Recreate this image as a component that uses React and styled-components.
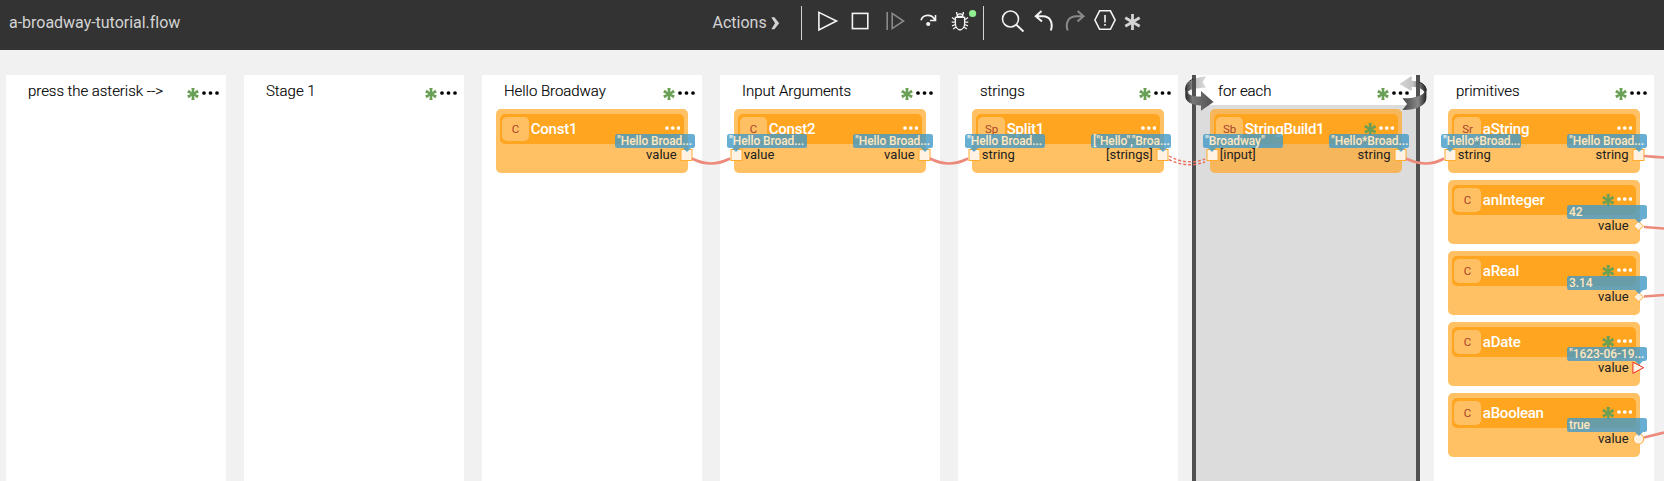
import React from "react";
import styled, { createGlobalStyle, css } from "styled-components";

const GlobalStyle = createGlobalStyle`
  * { box-sizing: border-box; }
  body {
    margin: 0;
    overflow: hidden;
    background: #f1f1f1;
    font-family: Roboto, "Liberation Sans", sans-serif;
  }
`;

const Page = styled.div`
  display: flex;
  flex-direction: column;
  height: 481px;
  overflow: hidden;
`;

const Toolbar = styled.header`
  display: flex;
  flex: none;
  height: 50px;
  background: #333;
  color: #d3d3d3;
  font-size: 16px;
  line-height: 46px;
`;

const FileName = styled.div`
  width: 712.5px;
  padding-left: 9px;
  letter-spacing: -0.02px;
`;

const Actions = styled.div`
  display: flex;
  gap: 4px;
  width: 88.5px;
`;

const Chevron = styled.svg`
  width: 9px;
  height: 14px;
  margin-top: 16px;
`;

const ToolGroup = styled.div`
  display: flex;
  height: 34px;
  margin-top: 6px;
  padding-left: ${(p) => p.$inset}px;
  width: ${(p) => p.$width}px;
  border-left: 1px solid #d3d3d3;
`;

const Tool = styled.svg`
  flex: none;
  width: ${(p) => p.$width}px;
  height: 34px;
  overflow: visible;
  fill: none;
  stroke: ${(p) => (p.$disabled ? "#8a8a8a" : "#f4f4f4")};
  stroke-width: 1.6;
`;

const Canvas = styled.main`
  position: relative;
  display: flex;
  flex: 1;
  gap: 18px;
  padding: 25px 0 0 6px;
`;

const StageColumn = styled.section`
  flex: none;
  width: 220px;
  background: ${(p) => (p.$loop ? "#dcdcdc" : "#fff")};
  ${(p) =>
    p.$loop &&
    css`
      position: relative;
      width: 228px;
      margin: 0 -4px;
      border: solid #505052;
      border-width: 0 4px;
    `}
`;

const StageHeader = styled.div`
  display: flex;
  align-items: center;
  height: 30px;
  padding: 2px 7px 0 22px;
  background: #fff;
`;

const StageTitle = styled.div`
  flex: 1;
  color: #000;
  font-size: 15px;
  font-weight: 300;
  letter-spacing: -0.05px;
  line-height: 30px;
  white-space: nowrap;
  -webkit-text-stroke: 0.15px #000;
`;

const Glyph = styled.svg`
  flex: none;
  width: ${(p) => p.$width}px;
  height: ${(p) => p.$height}px;
  margin: ${(p) => p.$margin || 0};
`;

const CardList = styled.div`
  display: flex;
  flex-direction: column;
  gap: 6.9px;
  padding: 3.8px 14px 0;
`;

const Card = styled.article`
  position: relative;
  height: 64.1px;
  padding: 5.4px 4.4px;
  border-radius: 5px;
  background: ${(p) => (p.$dim ? "#f5b65c" : "#ffc164")};
`;

const CardHeader = styled.div`
  display: flex;
  align-items: center;
  height: 29.6px;
  padding: 0 3.5px 0 2px;
  border-radius: 5px;
  background: #ffa51f;
`;

const ActorIcon = styled.div`
  width: 26.4px;
  height: 24.6px;
  border-radius: 5px;
  background: #ffc064;
  color: #a8432a;
  font-size: 11.5px;
  line-height: 24px;
  text-align: center;
`;

const ActorName = styled.div`
  flex: 1;
  padding-left: 2px;
  color: #fff;
  font-size: 15px;
  font-weight: 500;
  letter-spacing: -0.24px;
  line-height: 28px;
`;

const Ports = styled.div`
  display: flex;
  justify-content: space-between;
  padding: 2.6px 7px 0 5.4px;
  color: #222;
  font-size: 13px;
  line-height: 18px;
`;

const PortMark = styled.svg`
  position: absolute;
  top: 39.3px;
  ${(p) => p.$side}: -4.5px;
  width: 13px;
  height: 13px;
  overflow: visible;
  fill: #fff2e2;
  stroke: #ffab2e;
`;

const Value = styled.div`
  position: absolute;
  top: 25.3px;
  ${(p) => p.$side}: -7px;
  width: 80px;
  height: 14px;
  padding-left: 2px;
  border-radius: 2.5px;
  background: #439bc9;
  color: #fff7e6;
  font-size: 12px;
  font-weight: 500;
  letter-spacing: -0.1px;
  line-height: 14px;
  white-space: nowrap;
  opacity: 0.8;

  &::after {
    content: "";
    position: absolute;
    top: 14px;
    ${(p) => p.$side}: 4.5px;
    border: solid transparent;
    border-width: 4.5px 4.5px 0;
    border-top-color: #439bc9;
  }
`;

const Overlay = styled.svg`
  position: absolute;
  inset: 0;
  width: 1664px;
  height: 431px;
  fill: none;
  stroke: #ec8b7b;
  stroke-width: 2.7;
  pointer-events: none;
`;

const LoopArrow = styled.svg`
  position: absolute;
  top: 0;
  ${(p) => p.$side}: ${(p) => p.$offset}px;
  width: 30px;
  height: 38px;
`;

function Asterisk({ size = 12, color = "#6a9f56", margin }) {
  return (
    <Glyph $width={size} $height={size} $margin={margin} viewBox="-6 -6 12 12">
      <g fill={color}>
        {[0, 60, 120].map((a) => (
          <path key={a} transform={`rotate(${a})`} d="M-1.6 -5.9H1.6L.9 0 1.6 5.9H-1.6L-.9 0Z" />
        ))}
      </g>
    </Glyph>
  );
}

function Dots({ color, width, margin }) {
  return (
    <Glyph $width={width} $height={4} $margin={margin} viewBox={`0 0 ${width} 4`}>
      {[2, width / 2, width - 2].map((x) => (
        <circle key={x} cx={x} cy="2" r="1.85" fill={color} />
      ))}
    </Glyph>
  );
}

function Port({ side, shape = "square" }) {
  return (
    <PortMark $side={side} viewBox="0 0 13 13">
      {shape === "square" && <rect x="1" y="1.5" width="11" height="11" />}
      {shape === "diamond" && <path d="M6.5 2.2L11.4 7 6.5 11.8 1.6 7Z" />}
      {shape === "circle" && <circle cx="6.5" cy="7" r="5.2" />}
      {shape === "triangle" && <path stroke="#f02a20" d="M.9 1.2L11.7 6.7.9 12.3Z" />}
    </PortMark>
  );
}

function Actor({ code, name, asterisk, dim, input, output }) {
  return (
    <Card $dim={dim}>
      <CardHeader>
        <ActorIcon>{code}</ActorIcon>
        <ActorName>{name}</ActorName>
        {asterisk && <Asterisk size={12.5} margin="0 2.5px 0 0" />}
        <Dots color="#fff" width={15.5} margin="0 0 1px" />
      </CardHeader>
      <Ports>
        <span>{input?.label}</span>
        <span>{output.label}</span>
      </Ports>
      {input && <Port side="left" />}
      <Port side="right" shape={output.shape} />
      {input && <Value $side="left">{input.value}</Value>}
      <Value $side="right">{output.value}</Value>
    </Card>
  );
}

function LoopArrows() {
  return (
    <>
      <LoopArrow $side="left" $offset={-12} viewBox="0 0 30 38">
        <defs>
          <linearGradient id="ribbonLeft" x1="0" x2="1">
            <stop offset="0" stopColor="#222" />
            <stop offset=".25" stopColor="#777" />
            <stop offset="1" stopColor="#505050" />
          </linearGradient>
          <linearGradient id="tailLeft" x1="0" x2="1">
            <stop offset="0" stopColor="#333" />
            <stop offset=".35" stopColor="#8c8c8c" />
            <stop offset=".55" stopColor="#c6c6c6" />
            <stop offset="1" stopColor="#dcdcdc" />
          </linearGradient>
        </defs>
        <path fill="url(#tailLeft)" d="M22.3 1.3C12 2.3 1.5 6.5 1.5 14.5L3 18C4 14.5 12 12.8 22 12.7L18.7 7Z" />
        <path fill="#505052" d="M8 0H12V14L8 15Z" />
        <path fill="none" stroke="#222" d="M9 4.2C4 6.3 1.6 9.7 1.7 14.5 1.8 16 3 17.5 4.5 18" />
        <path fill="url(#ribbonLeft)" d="M1.4 12.5C1 19 8 22 17 21.5V16L29.5 27 17 35.8V30.6C7 30 1.3 26.5 1.3 21Z" />
      </LoopArrow>
      <LoopArrow $side="right" $offset={-12} viewBox="0 0 30 38">
        <defs>
          <linearGradient id="ribbonRight" x1="0" x2="1">
            <stop offset="0" stopColor="#444" />
            <stop offset=".65" stopColor="#888" />
            <stop offset="1" stopColor="#222" />
          </linearGradient>
          <linearGradient id="headRight" x1="0" x2="1">
            <stop offset="0" stopColor="#d5d5d5" />
            <stop offset=".5" stopColor="#c2c2c2" />
            <stop offset="1" stopColor="#222" />
          </linearGradient>
        </defs>
        <path fill="url(#headRight)" d="M1.3 9L13.7 1V5.7C23 6.3 28.4 10 28.4 15L27 18C25 13.5 20 12 13.7 11.7V16Z" />
        <path fill="#505052" d="M18 0H22V14L18 12.5Z" />
        <path fill="none" stroke="#222" d="M21 7C25.5 8.8 28 11.5 28 15 27.5 17 26.5 18 25 19.5" />
        <path fill="url(#ribbonRight)" d="M28.4 13.5C28 20 18 23.5 4.5 23.3L9 29 4.5 35C19 35 28.4 30.5 28.4 23Z" />
      </LoopArrow>
    </>
  );
}

const hello = '"Hello Broad...';
const out = (label, value, shape) => ({ label, value, shape });

const stages = [
  { title: "press the asterisk -->", actors: [] },
  { title: "Stage 1", actors: [] },
  { title: "Hello Broadway", actors: [{ code: "C", name: "Const1", output: out("value", hello) }] },
  {
    title: "Input Arguments",
    actors: [{ code: "C", name: "Const2", input: out("value", hello), output: out("value", hello) }],
  },
  {
    title: "strings",
    actors: [{ code: "Sp", name: "Split1", input: out("string", hello), output: out("[strings]", '["Hello","Broa...') }],
  },
  {
    title: "for each",
    loop: true,
    actors: [
      {
        code: "Sb",
        name: "StringBuild1",
        asterisk: true,
        input: out("[input]", '"Broadway"'),
        output: out("string", '"Hello*Broad...'),
      },
    ],
  },
  {
    title: "primitives",
    actors: [
      { code: "Sr", name: "aString", input: out("string", '"Hello*Broad...'), output: out("string", hello) },
      { code: "C", name: "anInteger", asterisk: true, output: out("value", "42", "diamond") },
      { code: "C", name: "aReal", asterisk: true, output: out("value", "3.14", "diamond") },
      { code: "C", name: "aDate", asterisk: true, output: out("value", '"1623-06-19...', "triangle") },
      { code: "C", name: "aBoolean", asterisk: true, output: out("value", "true", "circle") },
    ],
  },
];

function Stage({ title, loop, actors }) {
  return (
    <StageColumn $loop={loop}>
      <StageHeader>
        <StageTitle>{title}</StageTitle>
        <Asterisk margin="5px 3.5px 0 0" />
        <Dots color="#000" width={17} margin="4px 0 0" />
      </StageHeader>
      <CardList>
        {actors.map((a) => (
          <Actor key={a.name} {...a} dim={loop} />
        ))}
      </CardList>
      {loop && <LoopArrows />}
    </StageColumn>
  );
}

function Tools() {
  return (
    <>
      <ToolGroup $inset={9.5} $width={182}>
        <Tool $width={33} viewBox="-15.5 -15 33 34">
          <path d="M-8.6 -8.6L9 0-8.6 9Z" />
        </Tool>
        <Tool $width={33} viewBox="-15.5 -15 33 34">
          <rect x="-8.1" y="-7.6" width="15.4" height="15.2" />
        </Tool>
        <Tool $width={33} $disabled viewBox="-16.5 -15 33 34">
          <path d="M-7.3 -9V9M-2.3 -7.6L9 0-2.3 7.6Z" />
        </Tool>
        <Tool $width={33} viewBox="-16.5 -15 33 34">
          <path d="M-6.5 -.8C-4.5 -7 4.5 -7.5 7.5 -.8M8 -6V-.5H2.5" />
          <circle cx="0.7" cy="3" r="2.1" fill="#f4f4f4" stroke="none" />
        </Tool>
        <Tool $width={33} viewBox="-16 -15 33 34">
          <g strokeWidth="1.3">
            <path d="M-3 -4.5C-3 -8 3 -8 3 -4.5ZM-4.6 -3.6H4.6V3C4.6 6 2.5 8.5 0 9-2.5 8.5-4.6 6-4.6 3ZM-3.3 -9V-7L-2 -6M3.3 -9V-7L2 -6" />
            <path d="M-4.6 -1L-8 -3.5M-4.6 1.2H-8.3M-4.6 3.5L-8 4.8M-4 6L-6.8 8M4.6 -1L8 -3.5M4.6 1.2H8.3M4.6 3.5L8 4.8M4 6L6.8 8" />
          </g>
          <circle cx="12.6" cy="-7.5" r="3.6" fill="#90ee90" stroke="none" />
        </Tool>
      </ToolGroup>
      <ToolGroup $inset={15} $width={180}>
        <Tool $width={30} viewBox="-15 -15 30 34">
          <circle cx="-3.5" cy="-2" r="8" />
          <path strokeWidth="1.9" d="M2.3 3.8L9.5 10.5" />
        </Tool>
        <Tool $width={30} viewBox="-15 -15 30 34">
          <path strokeWidth="2" d="M-2.5 -10L-8.2 -4.7-2 .5M-8 -4.7H-1C6 -4.7 9.5 1.5 6.8 9.5" />
        </Tool>
        <Tool $width={30} $disabled viewBox="-15.5 -15 30 34">
          <path strokeWidth="2" d="M3.2 -10L9 -4.7 3 .5M8.8 -4.7H2C-6 -4.7 -9.5 1.5 -6.8 9.5" />
        </Tool>
        <Tool $width={30} viewBox="-16 -15 30 34">
          <path d="M-10.1 -1L-5.4 -10.2H5.4L10.1 -1 5.4 8.3H-5.4ZM0 -6V1.5M0 3V4.8" />
        </Tool>
        <Tool $width={30} viewBox="-15 -15 30 34">
          <path stroke="#d3d3d3" strokeWidth="2.8" d="M-1.5 -7V9M-8.7 -3.2L5.7 5.2M-8.7 5.2L5.7 -3.2" />
        </Tool>
      </ToolGroup>
    </>
  );
}

export default function App() {
  return (
    <Page>
      <GlobalStyle />
      <Toolbar>
        <FileName>a-broadway-tutorial.flow</FileName>
        <Actions>
          <span>Actions</span>
          <Chevron viewBox="0 0 9 14">
            <path d="M.3 1.2H3.4L8.2 7.2 3.4 13.2H.3L4 7.2Z" fill="#d3d3d3" />
          </Chevron>
        </Actions>
        <Tools />
      </Toolbar>
      <Canvas>
        {stages.map((s) => (
          <Stage key={s.title} {...s} />
        ))}
        <Overlay viewBox="0 50 1664 431">
          <path d="M692 158.5Q711 168.5 730 158.5M930 158.5Q949 168.5 968 158.5M1406 158.5Q1427 168.5 1444 158.5" />
          <path d="M1644 156Q1655 157 1664 157.5M1644 227L1664 228.5M1644 296.5L1664 295M1644 437.5L1664 432.5" />
          <path stroke="#ed6f5d" strokeWidth="1.4" strokeDasharray="3 2" d="M1169 156Q1187 166 1205 159M1169 159.5Q1187 168.5 1205 162" />
        </Overlay>
      </Canvas>
    </Page>
  );
}
